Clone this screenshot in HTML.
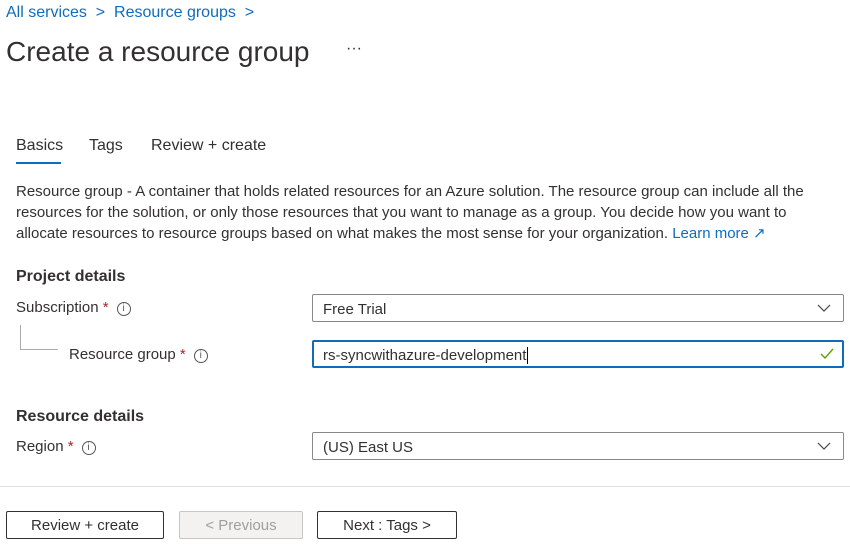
<!DOCTYPE html>
<html><head><meta charset="utf-8"><style>
*{box-sizing:border-box;margin:0;padding:0}
body{width:850px;height:546px;background:#fff;font-family:"Liberation Sans",sans-serif;color:#323130;position:relative;overflow:hidden}
.a{position:absolute;white-space:nowrap}
.bc{color:#0f6cbd;font-size:16px}
.lbl{font-size:15px}
.req{color:#a4262c}
.info{display:inline-block;width:14px;height:14px;border:1px solid #555;border-radius:50%;font-size:10px;text-align:center;line-height:12px;vertical-align:1px;margin-left:8px;color:#555}
.box{position:absolute;left:312px;width:532px;height:28px;border:1px solid #8a8886;border-radius:2px;font-size:15px;padding:0 10px;line-height:29px}
.chev{position:absolute;right:12px;top:8px}
.btn{position:absolute;top:511px;height:28px;border:1px solid #323130;border-radius:2px;font-size:15px;text-align:center;line-height:27px;color:#323130}
</style></head><body>
<div class="a bc" style="left:6px;top:4px">All services &nbsp;&gt;&nbsp; Resource groups &nbsp;&gt;</div>
<div class="a" style="left:6px;top:36px;font-size:28px;color:#323130">Create a resource group</div>
<div class="a" style="left:346px;top:40px;font-size:16px">···</div>
<div class="a" style="left:16px;top:137px;font-size:16px;color:#323130">Basics</div>
<div style="position:absolute;left:16px;top:162px;width:45px;height:2px;background:#0f6cbd"></div>
<div class="a" style="left:89px;top:137px;font-size:16px">Tags</div>
<div class="a" style="left:151px;top:137px;font-size:16px">Review + create</div>
<div style="position:absolute;left:16px;top:181px;width:820px;font-size:15px;line-height:21px;color:#323130">Resource group - A container that holds related resources for an Azure solution. The resource group can include all the resources for the solution, or only those resources that you want to manage as a group. You decide how you want to allocate resources to resource groups based on what makes the most sense for your organization. <span style="color:#0f6cbd">Learn more ↗</span></div>
<div class="a" style="left:16px;top:268px;font-size:16px;font-weight:bold;color:#323130">Project details</div>
<div class="a lbl" style="left:16px;top:299px">Subscription <span class="req">*</span><span class="info">i</span></div>
<div style="position:absolute;left:20px;top:325px;width:38px;height:25px;border-left:1px solid #aaa;border-bottom:1px solid #aaa"></div>
<div class="a lbl" style="left:69px;top:346px">Resource group <span class="req">*</span><span class="info">i</span></div>
<div class="box" style="top:294px">Free Trial<svg class="chev" width="14" height="10" viewBox="0 0 14 10"><path d="M1 2l6 6 6-6" fill="none" stroke="#444" stroke-width="1.2"/></svg></div>
<div class="box" style="top:340px;border:2px solid #0f6cbd;line-height:27px;padding-left:9px">rs-syncwithazure-development<span style="border-left:1px solid #000;margin-left:1px"></span><svg class="chev" style="top:6px;right:8px" width="14" height="12" viewBox="0 0 14 12"><path d="M1 6l4 4 8-9" fill="none" stroke="#57a300" stroke-width="1.4"/></svg></div>
<div class="a" style="left:16px;top:408px;font-size:16px;font-weight:bold;color:#323130">Resource details</div>
<div class="a lbl" style="left:16px;top:438px">Region <span class="req">*</span><span class="info">i</span></div>
<div class="box" style="top:432px">(US) East US<svg class="chev" width="14" height="10" viewBox="0 0 14 10"><path d="M1 2l6 6 6-6" fill="none" stroke="#444" stroke-width="1.2"/></svg></div>
<div style="position:absolute;left:0;top:486px;width:850px;height:1px;background:#e1dfdd"></div>
<div class="btn" style="left:6px;width:158px">Review + create</div>
<div class="btn" style="left:179px;width:124px;border-color:#c8c6c4;background:#f3f2f1;color:#a19f9d">&lt; Previous</div>
<div class="btn" style="left:317px;width:140px">Next : Tags &gt;</div>
</body></html>
